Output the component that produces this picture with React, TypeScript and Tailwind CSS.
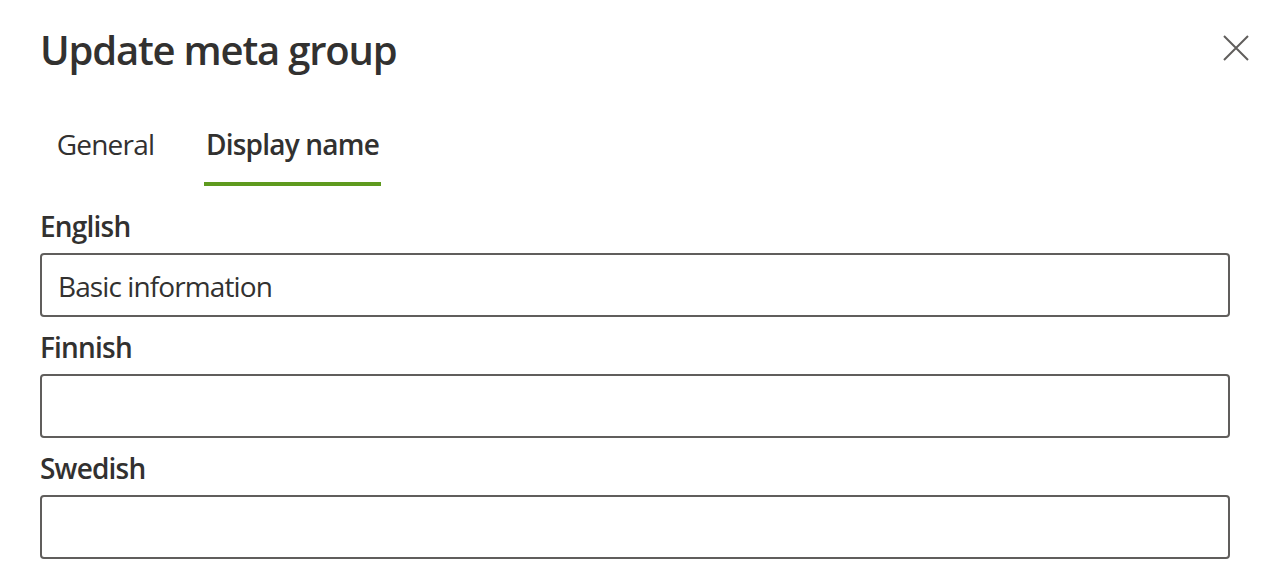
import { useState } from "react";

const fields = [
  { label: "English", value: "Basic information" },
  { label: "Finnish", value: "" },
  { label: "Swedish", value: "" },
];

function CloseIcon() {
  return (
    <svg width="26" height="26" viewBox="0 0 26 26" fill="none">
      <path d="M1 1 L25 25 M25 1 L1 25" stroke="#605e5c" strokeWidth="2" />
    </svg>
  );
}

export default function App() {
  const [tab, setTab] = useState("display");
  const [values, setValues] = useState(fields.map((f) => f.value));

  return (
    <div
      className="w-full h-[580px] bg-white overflow-hidden pl-[40px] pr-[38px] text-[#323130]"
      style={{ fontFamily: '"Open Sans", "Noto Sans", "Liberation Sans", sans-serif' }}
    >
      <div className="flex items-start justify-between pt-[22px]">
        <h1 className="text-[40px] leading-[56px] font-semibold tracking-[-1.2px]">Update meta group</h1>
        <button className="mt-[13px] mr-[-19px] p-0" aria-label="Close">
          <CloseIcon />
        </button>
      </div>

      <div className="flex gap-[48px] ml-[15px] mt-[46px]">
        <button
          className="w-[101px] flex flex-col items-center whitespace-nowrap"
          onClick={() => setTab("general")}
        >
          <span className={`text-[28px] leading-[40px] tracking-[-0.8px] ${tab === "general" ? "font-semibold" : ""}`}>General</span>
          <span className={`mt-[18px] h-[4px] w-full ${tab === "general" ? "bg-[#5e9a1e]" : ""}`} />
        </button>
        <button
          className="w-[177px] flex flex-col items-center whitespace-nowrap"
          onClick={() => setTab("display")}
        >
          <span className={`text-[28px] leading-[40px] tracking-[-0.8px] ${tab === "display" ? "font-semibold" : ""}`}>Display name</span>
          <span className={`mt-[18px] h-[4px] w-full ${tab === "display" ? "bg-[#5e9a1e]" : ""}`} />
        </button>
      </div>

      <div className="mt-[10px] flex flex-col">
        {fields.map((f, i) => (
          <div key={f.label} className="flex flex-col">
            <label className="pt-[10px] pb-[7px] text-[28px] leading-[40px] font-semibold tracking-[-0.8px]">{f.label}</label>
            <input
              className="h-[64px] w-full border-2 border-[#605e5c] rounded-[4px] pl-[16px] pr-[16px] pt-[2px] text-[28px] tracking-[-0.9px] text-[#323130] outline-none"
              value={values[i]}
              onChange={(e) => {
                const next = [...values];
                next[i] = e.target.value;
                setValues(next);
              }}
            />
          </div>
        ))}
      </div>
    </div>
  );
}
